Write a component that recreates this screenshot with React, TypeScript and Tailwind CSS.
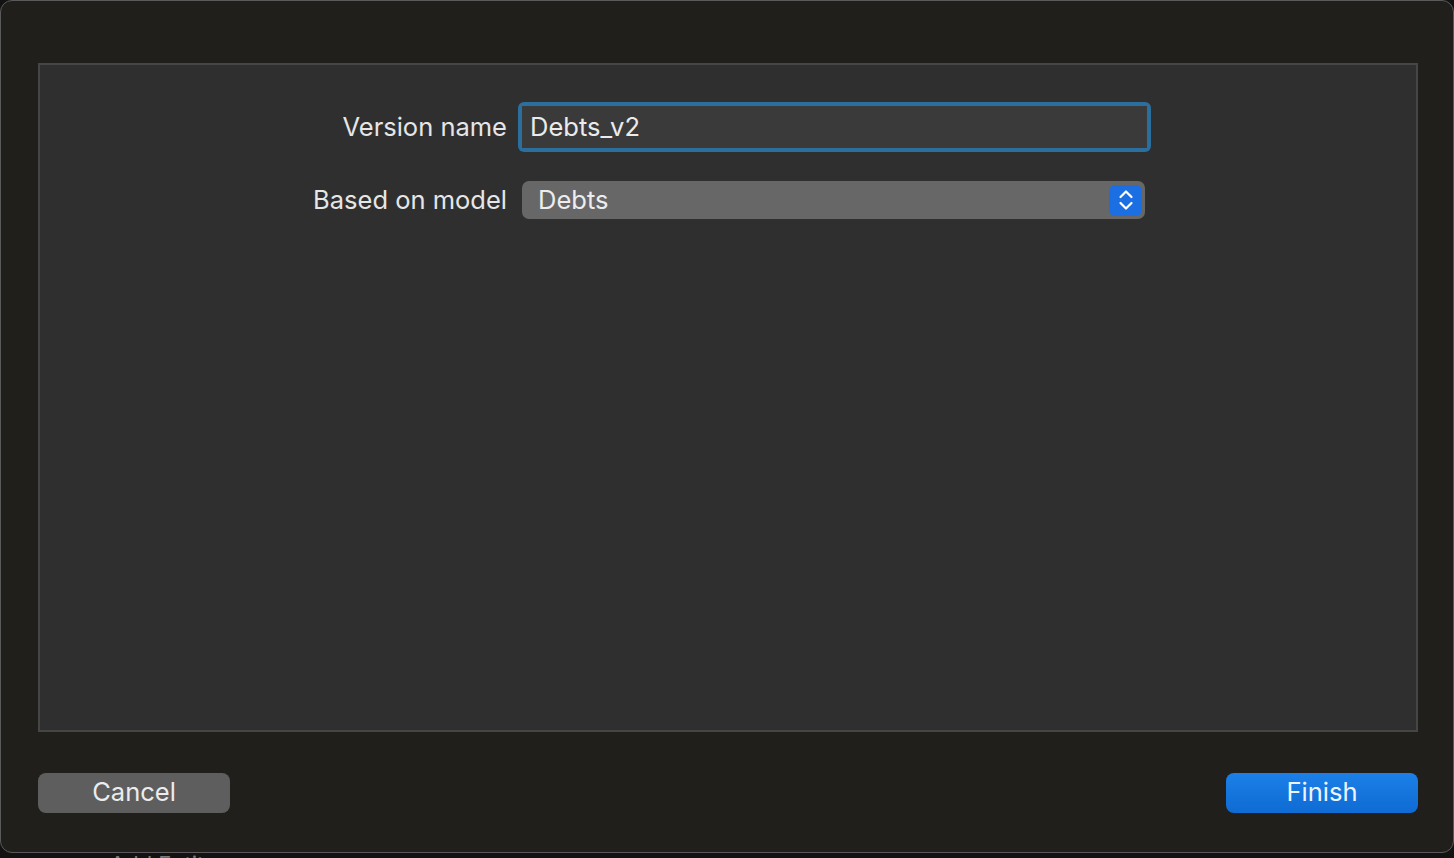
import React from 'react';

function Stepper() {
  return (
    <div className="flex h-[31px] w-[33px] items-center justify-center rounded-[6px] bg-[#1b6fe2]">
      <svg width="16" height="24" viewBox="0 0 16 24" fill="none" stroke="#ffffff" strokeWidth={2.2} strokeLinecap="round" strokeLinejoin="round">
        <path d="M2.5 9 L8 3.5 L13.5 9" />
        <path d="M2.5 15 L8 20.5 L13.5 15" />
      </svg>
    </div>
  );
}

export default function App() {
  return (
    <div className="relative h-[858px] w-full overflow-hidden bg-[#121212] font-['Inter','Liberation_Sans',sans-serif] text-[#e6e6e6]">
      {/* Sheet window */}
      <div className="flex h-[853px] flex-col rounded-[12px] border border-[#5a5a5a] bg-[#201f1c] pl-[37px] pr-[35px] pt-[62px]">
        {/* Content panel */}
        <div className="h-[669px] border-2 border-[#464646] bg-[#2f2f30] pt-[37px]">
          <div className="flex flex-col gap-[29px]">
            <div className="flex items-center">
              <div className="w-[478px] pr-[11px] text-right text-[25.5px] leading-none">Version name</div>
              <div className="h-[50px] w-[633px] rounded-[6px] bg-[#2a6f9e] p-[4px]">
                <div className="flex h-full items-center bg-[#3a3a3b] pl-[8px] text-[25.5px] leading-none text-[#ebebeb]">
                  Debts_v2
                </div>
              </div>
            </div>
            <div className="flex items-center">
              <div className="w-[478px] pr-[11px] text-right text-[25.5px] leading-none">Based on model</div>
              <div className="ml-[4px] flex h-[38px] w-[623px] items-center justify-between rounded-[7px] bg-[#676767] pl-[16px] pr-[3px] text-[25.5px] leading-none text-[#ededed]">
                <span>Debts</span>
                <Stepper />
              </div>
            </div>
          </div>
        </div>

        {/* Buttons */}
        <div className="mt-[41px] flex justify-between">
          <button className="h-[40px] w-[192px] rounded-[8px] bg-[#5e5e5e] pb-[2px] text-[25.5px] leading-none text-[#ececec]">
            Cancel
          </button>
          <button className="h-[40px] w-[192px] rounded-[8px] bg-gradient-to-b from-[#1c80e8] to-[#0e6bd3] pb-[2px] text-[25.5px] leading-none text-[#eef4ff]">
            Finish
          </button>
        </div>
      </div>

      {/* Underlying window, cut off */}
      <div className="pl-[110px] text-[22px] leading-[22px] text-[#7a7a7a]">Add Entity</div>
    </div>
  );
}
